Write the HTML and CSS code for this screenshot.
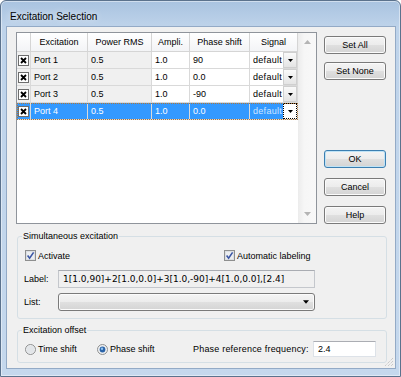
FILE: index.html
```html
<!DOCTYPE html>
<html lang="en">
  <head>
    <meta charset="UTF-8" />
    <meta name="viewport" content="width=device-width, initial-scale=1.0" />
    <title>Excitation Selection</title>
    <link rel="stylesheet" href="styles.css">
  </head>
  <body>
    <div class="window">
      <div class="titlebar"><span class="title">Excitation Selection</span></div>

      <div class="client">
        <div class="top">
          <div class="grid">
            <div class="grid-body">
              <div class="row head">
                <div class="cell"></div>
                <div class="cell">Excitation</div>
                <div class="cell">Power RMS</div>
                <div class="cell">Ampli.</div>
                <div class="cell">Phase shift</div>
                <div class="cell">Signal</div>
              </div>

              <div class="row">
                <div class="cell ro box"><svg class="xbox" viewBox="0 0 11 11"><rect x="0.5" y="0.5" width="10" height="10" fill="#fff" stroke="#6d6d6d"/><path d="M3 3 L8 8 M8 3 L3 8" stroke="#000" stroke-width="1.8"/></svg></div>
                <div class="cell ro">Port 1</div>
                <div class="cell ro">0.5</div>
                <div class="cell">1.0</div>
                <div class="cell">90</div>
                <div class="cell signal"><span class="sig-text">default</span><span class="drop"><svg viewBox="0 0 5 3"><path d="M0 0 H5 L2.5 3 Z" fill="#000"/></svg></span></div>
              </div>

              <div class="row">
                <div class="cell ro box"><svg class="xbox" viewBox="0 0 11 11"><rect x="0.5" y="0.5" width="10" height="10" fill="#fff" stroke="#6d6d6d"/><path d="M3 3 L8 8 M8 3 L3 8" stroke="#000" stroke-width="1.8"/></svg></div>
                <div class="cell ro">Port 2</div>
                <div class="cell ro">0.5</div>
                <div class="cell">1.0</div>
                <div class="cell">0.0</div>
                <div class="cell signal"><span class="sig-text">default</span><span class="drop"><svg viewBox="0 0 5 3"><path d="M0 0 H5 L2.5 3 Z" fill="#000"/></svg></span></div>
              </div>

              <div class="row">
                <div class="cell ro box"><svg class="xbox" viewBox="0 0 11 11"><rect x="0.5" y="0.5" width="10" height="10" fill="#fff" stroke="#6d6d6d"/><path d="M3 3 L8 8 M8 3 L3 8" stroke="#000" stroke-width="1.8"/></svg></div>
                <div class="cell ro">Port 3</div>
                <div class="cell ro">0.5</div>
                <div class="cell">1.0</div>
                <div class="cell">-90</div>
                <div class="cell signal"><span class="sig-text">default</span><span class="drop"><svg viewBox="0 0 5 3"><path d="M0 0 H5 L2.5 3 Z" fill="#000"/></svg></span></div>
              </div>

              <div class="row sel">
                <div class="cell ro box"><svg class="xbox" viewBox="0 0 11 11"><rect x="0.5" y="0.5" width="10" height="10" fill="#fff" stroke="#6d6d6d"/><path d="M3 3 L8 8 M8 3 L3 8" stroke="#000" stroke-width="1.8"/></svg></div>
                <div class="cell ro">Port 4</div>
                <div class="cell ro">0.5</div>
                <div class="cell">1.0</div>
                <div class="cell">0.0</div>
                <div class="cell signal"><span class="sig-text">default</span><span class="drop focus"><svg viewBox="0 0 5 3"><path d="M0 0 H5 L2.5 3 Z" fill="#000"/></svg></span></div>
              </div>
            </div>

            <div class="vscroll">
              <span class="sarrow"><svg viewBox="0 0 7 4"><path d="M0 4 L3.5 0 L7 4 Z" fill="#b4b4b4"/></svg></span>
              <span class="sarrow"><svg viewBox="0 0 7 4"><path d="M0 0 L3.5 4 L7 0 Z" fill="#b4b4b4"/></svg></span>
            </div>
          </div>

          <div class="side-buttons">
            <button class="btn first">Set All</button>
            <button class="btn second">Set None</button>
            <button class="btn default push">OK</button>
            <button class="btn">Cancel</button>
            <button class="btn">Help</button>
          </div>
        </div>

        <fieldset class="group simul">
          <legend>Simultaneous excitation</legend>
          <div class="check-row">
            <label class="opt"><svg class="cb" viewBox="0 0 11 11"><rect x="0.5" y="0.5" width="10" height="10" fill="#f4f5f6" stroke="#8e8f8f"/><rect x="1.5" y="1.5" width="8" height="8" fill="#eceef0" stroke="#dcdfe2"/><path d="M2.6 5.6 L4.6 8.2 L8.6 2.4" fill="none" stroke="#3b56a4" stroke-width="1.6"/></svg>Activate</label>
            <label class="opt"><svg class="cb" viewBox="0 0 11 11"><rect x="0.5" y="0.5" width="10" height="10" fill="#f4f5f6" stroke="#8e8f8f"/><rect x="1.5" y="1.5" width="8" height="8" fill="#eceef0" stroke="#dcdfe2"/><path d="M2.6 5.6 L4.6 8.2 L8.6 2.4" fill="none" stroke="#3b56a4" stroke-width="1.6"/></svg>Automatic labeling</label>
          </div>
          <div class="field-row label-row">
            <span class="field-name">Label:</span>
            <div class="ro-field">1[1.0,90]+2[1.0,0.0]+3[1.0,-90]+4[1.0,0.0],[2.4]</div>
          </div>
          <div class="field-row list-row">
            <span class="field-name">List:</span>
            <div class="combo"><svg viewBox="0 0 5 3"><path d="M0 0 H5 L2.5 3 Z" fill="#000"/></svg></div>
          </div>
        </fieldset>

        <fieldset class="group offset">
          <legend>Excitation offset</legend>
          <div class="radio-row">
            <label class="opt"><svg class="rb" viewBox="0 0 11 11"><circle cx="5.5" cy="5.5" r="5" fill="#eef0f2" stroke="#8e8f8f"/><circle cx="5.5" cy="5.5" r="3.8" fill="#e2e5e8"/></svg>Time shift</label>
            <label class="opt"><svg class="rb" viewBox="0 0 11 11"><circle cx="5.5" cy="5.5" r="5" fill="#eef0f2" stroke="#8e8f8f"/><circle cx="5.5" cy="5.5" r="2.9" fill="#2a63a8"/><circle cx="5" cy="4.8" r="1.2" fill="#8fc3f0"/></svg>Phase shift</label>
            <span class="freq-name">Phase reference frequency:</span>
            <div class="edit">2.4</div>
          </div>
        </fieldset>

        <svg class="grip" viewBox="0 0 10 10"><path d="M9 1 L1 9 M9 4 L4 9 M9 7 L7 9" stroke="#b9b9b9" stroke-width="1" stroke-dasharray="1 1"/></svg>
      </div>
    </div>
  </body>
</html>
```

FILE: styles.css
```css
html, body {
  margin: 0;
  padding: 0;
  background: #ffffff;
}
body {
  font-family: "Liberation Sans", Arial, sans-serif;
  font-size: 9px;
  color: #000;
}
.window {
  width: 401px;
  height: 377px;
  box-sizing: border-box;
  border: 1px solid #5b728d;
  border-radius: 6px 6px 0 0;
  padding: 0 5px 8px 6px;
  background: linear-gradient(#a9c3e0, #bed3ea 26px, #c5d8ed);
  box-shadow: inset 0 0 0 1px rgba(255, 255, 255, 0.45);
}
.titlebar {
  height: 26px;
  box-sizing: border-box;
  padding: 4px 0 0 3px;
  display: flex;
  align-items: center;
}
.title {
  font-size: 10px;
  text-shadow: 0 0 6px rgba(255, 255, 255, 0.9);
}
.client {
  position: relative;
  height: 341px;
  box-sizing: border-box;
  padding: 5px 8px 0 9px;
  background: #f0f0f0;
  box-shadow: 0 0 0 1px #93aac6;
}
.top {
  display: flex;
  height: 192px;
}
.grid {
  width: 301px;
  height: 192px;
  box-sizing: border-box;
  border: 1px solid #8f949b;
  background: #fff;
  display: flex;
}
.grid-body {
  width: 281px;
}
.row {
  display: grid;
  grid-template-columns: 14px 57px 64px 38px 60px 48px;
  height: 17px;
  box-sizing: border-box;
  border-bottom: 1px solid #d9d9d9;
}
.cell {
  box-sizing: border-box;
  border-right: 1px solid #d9d9d9;
  padding: 0 3px;
  line-height: 16px;
  white-space: nowrap;
  overflow: hidden;
}
.row.head {
  height: 19px;
  border-bottom-color: #d5d5d5;
}
.row.head .cell {
  text-align: center;
  line-height: 18px;
  background: linear-gradient(#ffffff, #f3f4f6);
  border-right-color: #d5d5d5;
}
.cell.ro {
  background: #f0f0f0;
}
.cell.box {
  padding: 0;
  display: flex;
  align-items: center;
  justify-content: center;
}
.xbox {
  width: 11px;
  height: 11px;
  display: block;
}
.cell.signal {
  display: flex;
  padding-right: 0;
}
.sig-text {
  flex: 1;
  overflow: hidden;
  letter-spacing: 0.3px;
}
.drop {
  width: 14px;
  height: 16px;
  box-sizing: border-box;
  border: 1px solid #cfcfcf;
  background: linear-gradient(#fafafa, #e4e4e4);
  display: flex;
  align-items: center;
  justify-content: center;
}
.drop svg {
  width: 5px;
  height: 3px;
}
.row.sel {
  outline: 1px dotted #b0783a;
  outline-offset: -1px;
}
.row.sel .cell {
  background: #3399ff;
  color: #fff;
}
.row.sel .cell.signal {
  color: #cfe6ff;
}
.drop.focus {
  background: #fff;
  border: 1px dotted #000;
}
.vscroll {
  width: 18px;
  background: linear-gradient(90deg, #ececec, #f6f6f6 35%, #f8f8f8);
  display: flex;
  flex-direction: column;
  justify-content: space-between;
}
.sarrow {
  height: 18px;
  display: flex;
  align-items: center;
  justify-content: center;
}
.sarrow svg {
  width: 7px;
  height: 4px;
}
.side-buttons {
  display: flex;
  flex-direction: column;
  margin-left: 7px;
  width: 62px;
}
.btn {
  height: 18px;
  width: 62px;
  padding: 0;
  margin-top: 10px;
  font-family: inherit;
  font-size: 9px;
  color: #000;
  border: 1px solid #7a7a7a;
  border-radius: 3px;
  background: linear-gradient(#f4f4f4 0%, #ececec 49%, #e0e0e0 50%, #d4d4d4 100%);
  box-shadow: inset 0 0 0 1px #fbfbfb;
}
.btn.first {
  margin-top: 4px;
}
.btn.second {
  margin-top: 8px;
}
.btn.push {
  margin-top: auto;
}
.btn.default {
  border-color: #3c7fb1;
  box-shadow: inset 0 0 0 1px #bfe3f6;
}
.group {
  margin: 7px 0 0 1px;
  padding: 0 4px 7px 4px;
  border: 1px solid #d5dfe5;
  border-radius: 3px;
  min-width: 0;
}
.group legend {
  padding: 0 1px;
  line-height: 11px;
}
.group.offset {
  margin-top: 6px;
  padding-bottom: 5px;
}
.opt {
  display: flex;
  align-items: center;
  gap: 2px;
  white-space: nowrap;
}
.cb, .rb {
  width: 11px;
  height: 11px;
  display: block;
}
.check-row {
  display: grid;
  grid-template-columns: 199px auto;
  height: 11px;
  margin-top: 8px;
  padding-left: 3px;
}
.field-row {
  display: flex;
  align-items: center;
  padding-left: 2px;
}
.label-row {
  margin-top: 9px;
}
.list-row {
  margin-top: 5px;
}
.field-name {
  width: 34px;
}
.ro-field {
  width: 257px;
  height: 18px;
  box-sizing: border-box;
  border: 1px solid #c4c7cc;
  border-top-color: #a9acb2;
  background: #f0f0f0;
  padding-left: 4px;
  line-height: 16px;
  font-family: "DejaVu Sans", Verdana, sans-serif;
  font-size: 9px;
  white-space: nowrap;
  overflow: hidden;
}
.combo {
  width: 257px;
  height: 18px;
  box-sizing: border-box;
  border: 1px solid #7a7a7a;
  border-radius: 3px;
  background: linear-gradient(#f4f4f4 0%, #ececec 49%, #e0e0e0 50%, #d4d4d4 100%);
  box-shadow: inset 0 0 0 1px #fbfbfb;
  display: flex;
  align-items: center;
  justify-content: flex-end;
  padding-right: 5px;
}
.combo svg {
  width: 6px;
  height: 4px;
}
.radio-row {
  display: grid;
  grid-template-columns: 72px 96px 120px 63px;
  align-items: center;
  height: 16px;
  margin-top: 5px;
  padding-left: 3px;
}
.freq-name {
  letter-spacing: 0.2px;
}
.edit {
  width: 63px;
  height: 16px;
  box-sizing: border-box;
  border: 1px solid #dde2e8;
  border-top-color: #abadb3;
  background: #fff;
  padding-left: 4px;
  line-height: 14px;
}
.grip {
  position: absolute;
  right: 1px;
  bottom: 1px;
  width: 10px;
  height: 10px;
}
```
